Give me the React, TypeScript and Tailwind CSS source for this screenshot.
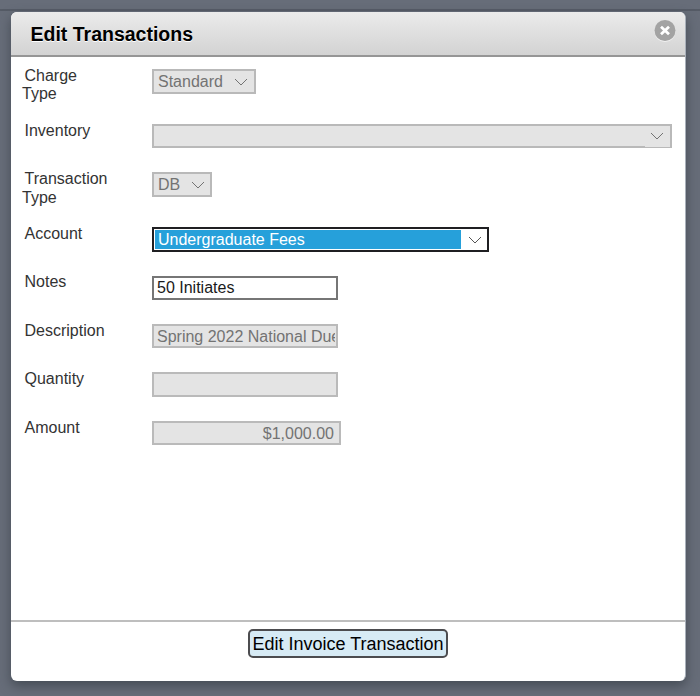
import clsx from "clsx";
import type { ReactNode } from "react";

function Chevron({ className }: { className?: string }) {
  return (
    <svg
      viewBox="0 0 14 8"
      fill="none"
      stroke="currentColor"
      strokeWidth="1"
      className={clsx("h-2 w-3.5 shrink-0", className)}
    >
      <path d="M1 1l6 6 6-6" />
    </svg>
  );
}

function Row({
  label,
  className,
  labelClassName = "pt-px",
  children,
}: {
  label: ReactNode;
  className: string;
  labelClassName?: string;
  children: ReactNode;
}) {
  return (
    <div className={clsx("flex items-start", className)}>
      <div
        className={clsx(
          "w-[130px] shrink-0 indent-[2.5px] leading-[18.5px] text-[#333]",
          labelClassName,
        )}
      >
        {label}
      </div>
      <div className="mt-[3px]">{children}</div>
    </div>
  );
}

const disabledBox = "border-2 border-[#b9b9b9] bg-[#e4e4e4] text-[#737373]";
const disabledInput =
  "block border-2 border-[#bababa] bg-[#e4e4e4] pt-px pl-[3px] text-[#737373]";

export default function App() {
  return (
    <div className="h-[696px] w-[700px] overflow-hidden bg-[#676d79] font-['Liberation_Sans',Arial,sans-serif] text-base">
      <div className="h-[11px] border-b-2 border-[#555b66]" />
      <div className="mt-px ml-[11px] flex h-[669px] w-[675px] flex-col overflow-hidden rounded-[6px] border-r border-[#a9b0ba] bg-white shadow-[0_5px_12px_rgba(50,58,66,0.65)]">
        {/* Title bar */}
        <div className="flex h-[45px] shrink-0 justify-between border-b-2 border-[#969696] bg-linear-to-b from-[#ebebeb] to-[#d3d3d3] pr-[9.5px] pl-[19.5px]">
          <h1 className="pt-[7px] text-[19.5px] leading-[30px] font-bold text-black [text-shadow:0_1px_0_#fff]">
            Edit Transactions
          </h1>
          <button aria-label="Close" className="mt-[7px] h-6 w-[22px]">
            <svg viewBox="0 0 22 24" className="h-6 w-[22px]">
              <circle cx="11" cy="12.5" r="10.5" fill="#f1f1f1" />
              <circle cx="11" cy="11.5" r="10.5" fill="#a3a3a3" />
              <path
                d="M7 7.8l8 7.4M15 7.8l-8 7.4"
                stroke="#fff"
                strokeWidth="2.8"
              />
            </svg>
          </button>
        </div>

        {/* Form */}
        <div className="flex-1 pt-[9px] pl-[11px]">
          <Row label={<>Charge<br />Type</>} className="h-[55px]" labelClassName="pt-px leading-[18px]">
            <div className={clsx(disabledBox, "flex h-[25px] w-[104px] items-center justify-between pr-1.5 pl-1")}>
              Standard
              <Chevron />
            </div>
          </Row>
          <Row label="Inventory" className="h-12">
            <div className={clsx(disabledBox, "relative flex h-6 w-[520px] items-center justify-end pr-1.5")}>
              <Chevron />
              {/* The arrow cell covers half of the bottom border */}
              <div className="absolute right-0 -bottom-px h-px w-[25px] bg-[#e4e4e4]" />
            </div>
          </Row>
          <Row label={<>Transaction<br />Type</>} className="h-[55px]">
            <div className={clsx(disabledBox, "flex h-[25px] w-[60px] items-center justify-between pr-[5px] pl-1")}>
              DB
              <Chevron />
            </div>
          </Row>
          <Row label="Account" className="h-[49px]">
            <div className="flex h-[25px] w-[337px] items-center border-2 border-[#1f1f22] bg-white p-px text-[#555]">
              <div className="flex h-[19px] w-[306px] items-center bg-[#26a0da] pl-[3px] text-white">
                Undergraduate Fees
              </div>
              <Chevron className="ml-[7px]" />
            </div>
          </Row>
          <Row label="Notes" className="h-12" labelClassName="">
            <input
              defaultValue="50 Initiates"
              className="block h-6 w-[186px] border-2 border-[#767676] bg-white px-[3px] text-[#1a1a1a]"
            />
          </Row>
          <Row label="Description" className="h-12">
            <input disabled defaultValue="Spring 2022 National Dues" className={clsx(disabledInput, "h-6 w-[186px] pr-px")} />
          </Row>
          <Row label="Quantity" className="h-[49px]">
            <input disabled className={clsx(disabledInput, "h-[25px] w-[186px]")} />
          </Row>
          <Row label="Amount" className="h-12">
            <input disabled defaultValue="$1,000.00" className={clsx(disabledInput, "h-6 w-[189px] pr-[5px] text-right")} />
          </Row>
        </div>

        {/* Footer */}
        <div className="flex h-[61px] shrink-0 items-start justify-center border-t-2 border-[#bebebe] pt-[7px]">
          <button className="h-[29px] w-[200px] rounded-[5px] border-2 border-[#4c4c4f] bg-[#d7ebf5] pt-px text-[18px] leading-[25px] whitespace-nowrap text-black">
            Edit Invoice Transaction
          </button>
        </div>
      </div>
    </div>
  );
}
